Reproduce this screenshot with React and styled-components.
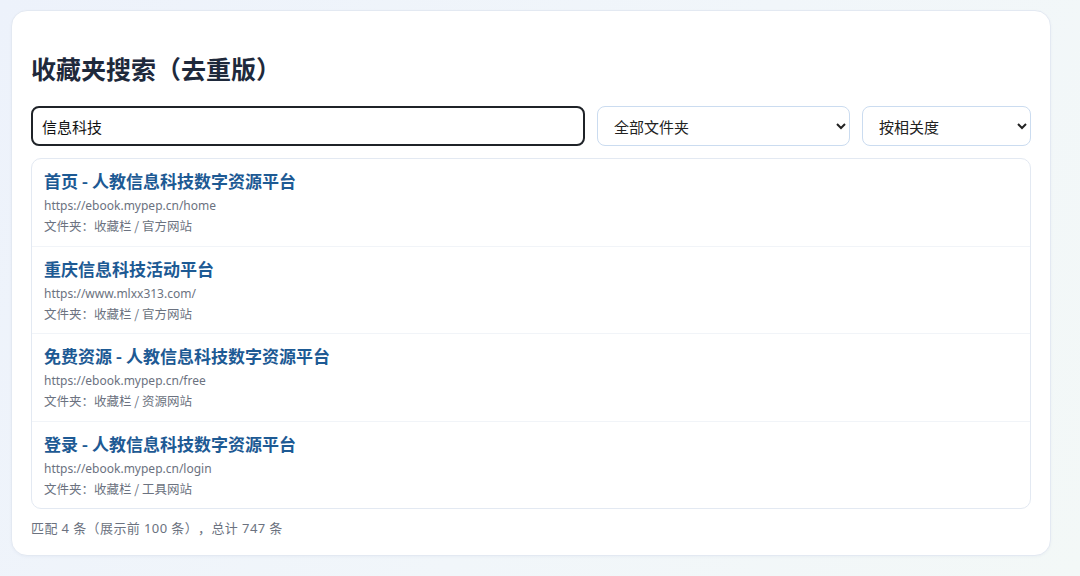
import React from 'react';
import styled, { createGlobalStyle } from 'styled-components';

const GlobalStyle = createGlobalStyle`
  html, body {
    margin: 0;
    padding: 0;
    height: 100%;
  }
  body {
    font-family: "Noto Sans", "Noto Sans CJK SC", sans-serif;
    background: linear-gradient(120deg, #edf2fb 0%, #f1f6fa 55%, #f3f8f7 100%);
    min-height: 576px;
    text-spacing-trim: space-all;
  }
`;

const Page = styled.div`
  padding: 10px 29px 20px 11px;
`;

const Card = styled.div`
  background: #fff;
  border: 1px solid #e3e9f2;
  border-radius: 16px;
  padding: 20px 19px 18px 19px;
  box-shadow: 0 1px 3px rgba(30, 60, 120, 0.04);
`;

const Title = styled.h1`
  margin: 21px 0 22px;
  font-family: "Noto Sans CJK SC", sans-serif;
  font-size: 25px;
  line-height: 32px;
  font-weight: 700;
  color: #1e293b;
`;

const Controls = styled.div`
  display: flex;
  gap: 12px;
  margin-bottom: 12px;
`;

const SearchInput = styled.input`
  flex: 1;
  min-width: 0;
  height: 40px;
  box-sizing: border-box;
  padding: 0 9px;
  border: 2px solid #1f2328;
  border-radius: 8px;
  font-family: "Noto Sans CJK SC", sans-serif;
  font-size: 15px;
  color: #111;
  outline: none;
`;

const Select = styled.select`
  width: ${p => p.$w}px;
  height: 40px;
  box-sizing: border-box;
  padding: 0 8px 0 12px;
  border: 1px solid #cbdcf0;
  border-radius: 8px;
  background: #fff;
  font-family: "Noto Sans CJK SC", sans-serif;
  font-size: 15px;
  color: #222;
`;

const ResultList = styled.div`
  border: 1px solid #e3e9f2;
  border-radius: 10px;
  overflow: hidden;
`;

const ResultItem = styled.div`
  padding: 10px 12px 9.5px;
  border-bottom: 1px solid #f1f4f8;

  &:last-child {
    border-bottom: none;
  }
`;

const ResultTitle = styled.div`
  font-family: "Noto Sans CJK SC", sans-serif;
  font-size: 17px;
  line-height: 24px;
  font-weight: 700;
  color: #1d5a94;
`;

const ResultUrl = styled.div`
  margin-top: 3px;
  font-size: 12px;
  line-height: 20px;
  color: #6b7280;
`;

const ResultFolder = styled.div`
  margin-top: 0;
  font-family: "Noto Sans CJK SC", sans-serif;
  font-size: 12.5px;
  line-height: 20px;
  color: #6b7280;
`;

const Summary = styled.div`
  margin-top: 10px;
  font-family: "Noto Sans", "Noto Sans CJK SC", sans-serif;
  font-size: 13px;
  line-height: 18px;
  letter-spacing: 0.4px;
  color: #6b7280;
`;

const results = [
  { title: '首页 - 人教信息科技数字资源平台', url: 'https://ebook.mypep.cn/home', folder: '收藏栏 / 官方网站' },
  { title: '重庆信息科技活动平台', url: 'https://www.mlxx313.com/', folder: '收藏栏 / 官方网站' },
  { title: '免费资源 - 人教信息科技数字资源平台', url: 'https://ebook.mypep.cn/free', folder: '收藏栏 / 资源网站' },
  { title: '登录 - 人教信息科技数字资源平台', url: 'https://ebook.mypep.cn/login', folder: '收藏栏 / 工具网站' },
];

export default function App() {
  return (
    <>
      <GlobalStyle />
      <Page>
        <Card>
          <Title>收藏夹搜索（去重版）</Title>
          <Controls>
            <SearchInput defaultValue="信息科技" />
            <Select $w={253} defaultValue="all">
              <option value="all">全部文件夹</option>
            </Select>
            <Select $w={169} defaultValue="rel">
              <option value="rel">按相关度</option>
            </Select>
          </Controls>
          <ResultList>
            {results.map(r => (
              <ResultItem key={r.url}>
                <ResultTitle>{r.title}</ResultTitle>
                <ResultUrl>{r.url}</ResultUrl>
                <ResultFolder>文件夹：{r.folder}</ResultFolder>
              </ResultItem>
            ))}
          </ResultList>
          <Summary>匹配 4 条（展示前 100 条），总计 747 条</Summary>
        </Card>
      </Page>
    </>
  );
}
